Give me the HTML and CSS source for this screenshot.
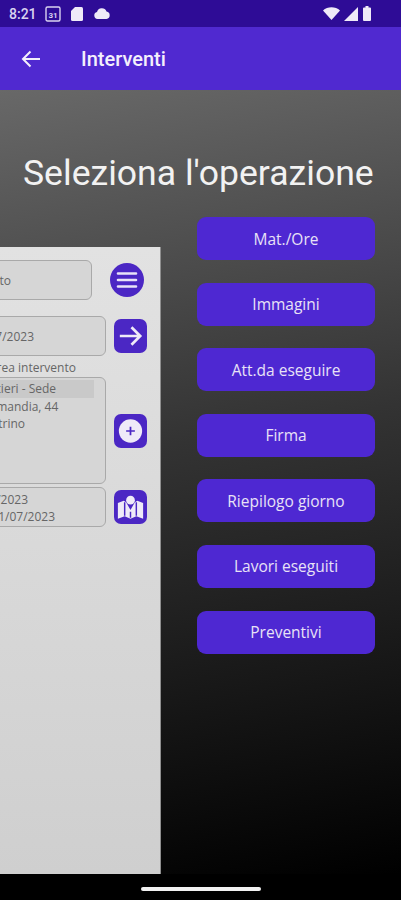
FILE: index.html
```html
<!DOCTYPE html>
<html lang="it">

<head>
    <meta charset="UTF-8">
    <meta name="viewport" content="width=device-width, initial-scale=1.0">
    <title>Interventi</title>
    <link rel="stylesheet" href="styles.css">
</head>

<body>
    <div class="app">
        <div class="status-bar">
            <span class="clock">8:21</span>
            <svg class="status-icon" width="16" height="18" viewBox="0 0 16 18">
                <rect x="1" y="2" width="14" height="14" rx="1.5" fill="none" stroke="#d9d2f0" stroke-width="1.4" />
                <text x="8" y="12.5" class="cal-text">31</text>
            </svg>
            <svg class="status-icon" width="14" height="16" viewBox="0 0 14 16">
                <path d="M5 1h6.500a1.500 1.500 0 0 1 1.500 1.500v11a1.500 1.500 0 0 1-1.500 1.500h-9a1.500 1.500 0 0 1-1.500-1.500V5z" fill="#efeaf8" />
            </svg>
            <svg class="status-icon" width="18" height="12" viewBox="0 0 18 12">
                <path d="M4.500 11a3.500 3.500 0 0 1-.5-6.900 5 5 0 0 1 9.500-.6 3.800 3.800 0 0 1 0 7.500z" fill="#efeaf8" />
            </svg>
            <div class="status-right">
                <svg width="17" height="13" viewBox="0 0 17 13">
                    <path d="M0 3.500C4.500-.8 12.500-.8 17 3.500L8.500 13z" fill="#efeaf8" />
                </svg>
                <svg width="14" height="14" viewBox="0 0 14 14">
                    <path d="M14 0v14H0z" fill="#efeaf8" />
                </svg>
                <svg width="10" height="15" viewBox="0 0 10 15">
                    <path d="M3.500 0h3v1.500H8a1 1 0 0 1 1 1V14a1 1 0 0 1-1 1H2a1 1 0 0 1-1-1V2.500a1 1 0 0 1 1-1h1.500z" fill="#efeaf8" />
                </svg>
            </div>
        </div>

        <div class="app-bar">
            <svg class="back" width="20" height="18" viewBox="0 0 20 18">
                <path d="M19 9H2M9.500 1.500 2 9l7.500 7.500" fill="none" stroke="#f4f0fc" stroke-width="2" />
            </svg>
            <h1>Interventi</h1>
        </div>

        <div class="content">
            <h2 class="title">Seleziona l'operazione</h2>
            <div class="columns">
                <div class="panel">
                    <div class="panel-inner">
                        <div class="row row-first">
                            <div class="field field-short"><span class="one">Progetto</span></div>
                            <div class="round-btn">
                                <svg width="34" height="34" viewBox="0 0 34 34">
                                    <path d="M8 10.500h18M8 17h18M8 23.500h18" stroke="#e9e3f8" stroke-width="2.600" stroke-linecap="round" />
                                </svg>
                            </div>
                        </div>
                        <div class="row row-date">
                            <div class="field"><span class="one">01/07/2023</span></div>
                            <div class="square-btn">
                                <svg width="33" height="34" viewBox="0 0 34 34">
                                    <path d="M6 17h21M18 8l9 9-9 9" fill="none" stroke="#efeaf8" stroke-width="2.800" />
                                </svg>
                            </div>
                        </div>
                        <div class="area-label">Area intervento</div>
                        <div class="row row-area">
                            <div class="field field-area">
                                <div class="area-line area-selected">Cantieri - Sede</div>
                                <div class="area-line">Normandia, 44</div>
                                <div class="area-line">Mestrino</div>
                            </div>
                            <div class="square-btn">
                                <svg width="33" height="34" viewBox="0 0 34 34">
                                    <circle cx="17" cy="17" r="12" fill="#efeaf8" />
                                    <path d="M12.500 17h9M17 12.500v9" stroke="#4b27c4" stroke-width="1.800" />
                                </svg>
                            </div>
                        </div>
                        <div class="row row-dates">
                            <div class="field field-dates">
                                <div>01/07/2023</div>
                                <div>31/07/2023</div>
                            </div>
                            <div class="square-btn">
                                <svg width="33" height="34" viewBox="0 0 34 34">
                                    <path d="M4 13l6-2.500 2.500 1.500 4.500 8 4.500-8 2.500-1.500 6 2.500v16l-7-2.500-6 2.500-6-2.500-7 2.500z" fill="#efeaf8" />
                                    <circle cx="17" cy="10" r="4.500" fill="#efeaf8" />
                                    <path d="M11 12v14M23 12v14M17 22v6" stroke="#4b27c4" stroke-width="1.500" />
                                </svg>
                            </div>
                        </div>
                    </div>
                </div>
                <div class="actions">
                    <button class="action">Mat./Ore</button>
                    <button class="action">Immagini</button>
                    <button class="action">Att.da eseguire</button>
                    <button class="action">Firma</button>
                    <button class="action">Riepilogo giorno</button>
                    <button class="action">Lavori eseguiti</button>
                    <button class="action">Preventivi</button>
                </div>
            </div>
        </div>

        <div class="nav-bar">
            <div class="nav-handle"></div>
        </div>
    </div>
</body>

</html>
```

FILE: styles.css
```css
html,
body {
    margin: 0;
    padding: 0;
    background-color: #000;
}

.app {
    width: 401px;
    height: 900px;
    display: flex;
    flex-direction: column;
    overflow: hidden;
    font-family: "Open Sans", sans-serif;
}

.status-bar {
    height: 27px;
    display: flex;
    align-items: center;
    padding: 0 9px;
    background-color: #2e0c96;
}

.clock {
    font-family: Roboto, sans-serif;
    font-size: 14px;
    font-weight: 500;
    color: #d9d2f0;
    margin-right: 8px;
}

.status-icon {
    margin-right: 9px;
}

.cal-text {
    font-family: Roboto, sans-serif;
    font-size: 8px;
    font-weight: 700;
    fill: #d9d2f0;
    text-anchor: middle;
}

.status-right {
    margin-left: auto;
    margin-right: 20px;
    display: flex;
    align-items: center;
    gap: 4px;
}

.app-bar {
    height: 63px;
    display: flex;
    align-items: center;
    padding-left: 21px;
    background-color: #5029d0;
}

.app-bar h1 {
    margin: 0 0 0 40px;
    font-family: Roboto, sans-serif;
    font-size: 20px;
    font-weight: 500;
    color: #f4f0fc;
}

.content {
    flex: 1;
    background: linear-gradient(170deg, #686868 0%, #333 45%, #000 100%);
}

.title {
    margin: 0;
    padding: 59px 0 0 23px;
    height: 69px;
    margin-bottom: -1px;
    font-family: Roboto, sans-serif;
    font-size: 35.600px;
    line-height: 48px;
    font-weight: 400;
    white-space: nowrap;
    color: #f2f2f2;
}

.columns {
    display: flex;
    align-items: flex-start;
}

.panel {
    width: 160px;
    height: 627px;
    margin-top: 30px;
    background: linear-gradient(#e2e2e2, #cfcfcf);
    border-right: 1px solid #8f8f8f;
    box-sizing: content-box;
    overflow: hidden;
}

.panel-inner {
    width: 300px;
    margin-left: -139px;
    font-size: 12px;
    color: #666;
}

.row {
    display: flex;
    align-items: center;
}

.row-first {
    margin-top: 13px;
}

.row-date {
    margin-top: 16px;
}

.row-dates {
    margin-top: 3px;
}

.field {
    width: 245px;
    height: 40px;
    box-sizing: border-box;
    display: flex;
    align-items: center;
    justify-content: flex-end;
    border: 1px solid #a9a9a9;
    border-radius: 6px;
    background-color: #d6d6d6;
}

.field-short {
    width: 231px;
}

.one {
    margin-right: 71px;
}

.field-short .one {
    margin-right: 80px;
}

.field-area {
    height: 107px;
    display: block;
    padding: 2px 11px 0 0;
}

.field-dates {
    display: block;
    padding: 3px 0 0 0;
    text-align: right;
    line-height: 17px;
}

.field-dates div {
    padding-right: 77px;
}

.field-dates div + div {
    padding-right: 50px;
}

.area-line {
    height: 17px;
    line-height: 17px;
    padding-left: 113px;
    white-space: nowrap;
}

.area-selected {
    height: 18px;
    background-color: #c9c9c9;
}

.area-label {
    margin-top: 3px;
    height: 18px;
    line-height: 18px;
    padding-left: 128px;
}

.round-btn {
    width: 34px;
    height: 34px;
    margin-left: 18px;
    border-radius: 50%;
    background-color: #4b27c4;
}

.square-btn {
    width: 33px;
    height: 34px;
    margin-left: 8px;
    border-radius: 7px;
    background-color: #4b27c4;
}

.actions {
    margin-left: 36px;
    margin-top: 0;
    display: flex;
    flex-direction: column;
    gap: 22.600px;
}

.action {
    width: 178px;
    height: 43px;
    border: none;
    border-radius: 9px;
    background-color: #4e28d2;
    color: #e8e2f6;
    font-family: "Open Sans", sans-serif;
    font-size: 15.500px;
    padding: 0;
}

.nav-bar {
    height: 26px;
    background-color: #000;
    display: flex;
    justify-content: center;
    padding-top: 13px;
    box-sizing: border-box;
}

.nav-handle {
    width: 120px;
    height: 4px;
    border-radius: 2px;
    background-color: #f2f2f2;
}

svg {
    display: block;
}
```
